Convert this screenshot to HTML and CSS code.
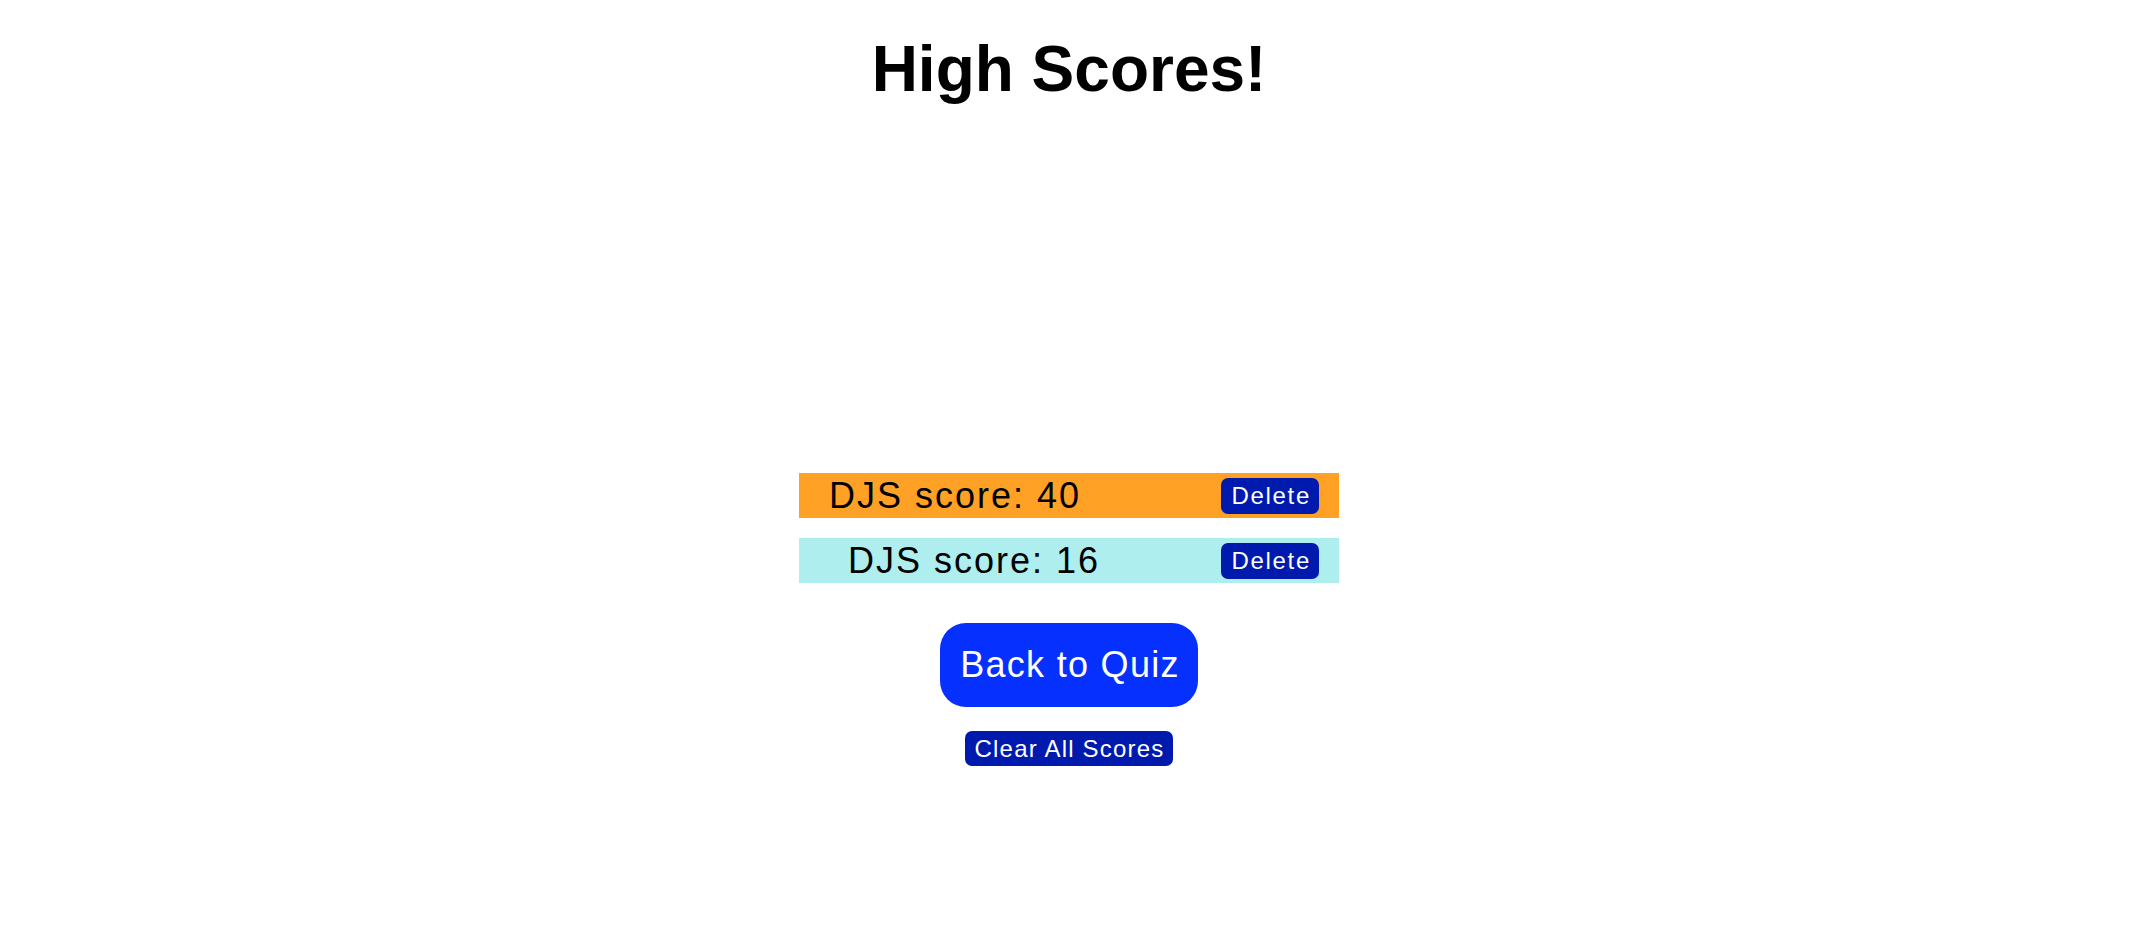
FILE: index.html
```html
<!DOCTYPE html>
<html lang="en">
<head>
<meta charset="utf-8">
<title>High Scores</title>
<link rel="stylesheet" href="styles.css">
</head>
<body>
<main class="page">
  <h1 class="title">High Scores!</h1>
  <ul class="score-list">
    <li class="score-row score-row--first">
      <span class="score-text">DJS score: 40</span>
      <button class="btn-small">Delete</button>
    </li>
    <li class="score-row score-row--second">
      <span class="score-text">DJS score: 16</span>
      <button class="btn-small">Delete</button>
    </li>
  </ul>
  <button class="btn-back">Back to Quiz</button>
  <button class="btn-small btn-clear">Clear All Scores</button>
</main>
</body>
</html>
```
FILE: styles.css
```css
html, body {
  margin: 0;
  padding: 0;
  background: #ffffff;
}

body {
  font-family: "Liberation Sans", Arial, sans-serif;
  color: #000000;
}

.page {
  display: flex;
  flex-direction: column;
  align-items: center;
  padding-right: 8px;
}

.title {
  font-size: 64px;
  font-weight: 700;
  line-height: 74px;
  margin: 32px 0 0;
}

.score-list {
  list-style: none;
  margin: 367px 0 0;
  padding: 0;
  width: 540px;
  display: flex;
  flex-direction: column;
  gap: 20px;
}

.score-row {
  height: 45px;
  box-sizing: border-box;
  display: flex;
  align-items: center;
  justify-content: space-between;
  padding: 0 20px 0 30px;
  font-size: 36px;
  letter-spacing: 2px;
}

.score-row--first {
  background: #ffa124;
}

.score-row--second {
  background: #afeeee;
  padding-left: 49px;
}

.btn-small {
  font-family: inherit;
  font-size: 24px;
  letter-spacing: 1.7px;
  color: #ffffff;
  background: #001aae;
  border: none;
  border-radius: 7px;
  height: 36px;
  padding: 0 8px 0 10px;
  cursor: pointer;
}

.btn-back {
  font-family: inherit;
  font-size: 36px;
  letter-spacing: 1.3px;
  color: #ffffff;
  background: #0530fe;
  border: none;
  border-radius: 26px;
  height: 84px;
  padding: 0 18px 0 20px;
  margin-top: 40px;
  cursor: pointer;
}

.btn-clear {
  height: 35px;
  margin-top: 24px;
  letter-spacing: 1.2px;
  padding: 0 9px 0 10px;
}
```
